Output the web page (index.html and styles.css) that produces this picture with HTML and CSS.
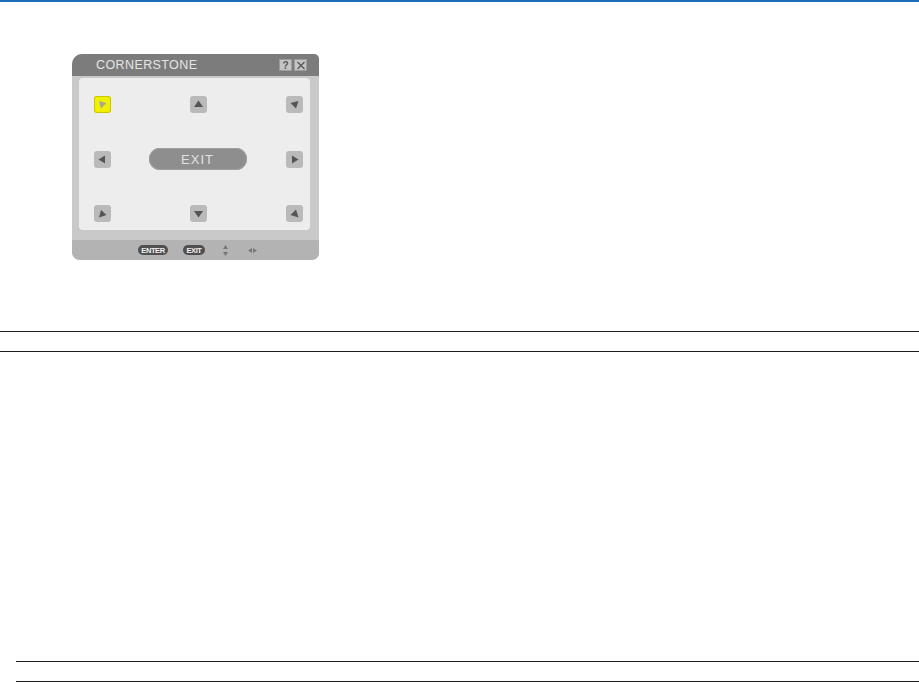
FILE: index.html
```html
<!DOCTYPE html>
<html lang="en">
  <head>
    <meta charset="UTF-8" />
    <title>Cornerstone</title>
    <link rel="stylesheet" href="styles.css">
  </head>
  <body>
    <div class="top-rule"></div>

    <!-- on-screen menu -->
    <div class="osd">
      <div class="osd-title">
        <span class="osd-name">CORNERSTONE</span>
        <span class="osd-icons">
          <span class="osd-icon">?</span>
          <span class="osd-icon">
            <svg width="10" height="9" viewBox="0 0 10 9"><path d="M1.5 1 L8.5 8 M8.5 1 L1.5 8" stroke="#555" stroke-width="1.3" fill="none"/></svg>
          </span>
        </span>
      </div>

      <div class="osd-body">
        <div class="osd-panel">
          <div class="key active">
            <svg viewBox="0 0 17 17"><polygon points="5,5 12.5,7 7,12.5" fill="#a8a890"/></svg>
          </div>
          <div class="key mid">
            <svg viewBox="0 0 17 17"><polygon points="8.5,4.5 13,11 4,11" fill="#555"/></svg>
          </div>
          <div class="key">
            <svg viewBox="0 0 17 17"><polygon points="12.5,5 10,12.5 4.5,7" fill="#555"/></svg>
          </div>

          <div class="key">
            <svg viewBox="0 0 17 17"><polygon points="4.5,8.5 11,4.5 11,12.5" fill="#555"/></svg>
          </div>
          <div class="exit-pill">EXIT</div>
          <div class="key">
            <svg viewBox="0 0 17 17"><polygon points="12.5,8.5 6,4.5 6,12.5" fill="#555"/></svg>
          </div>

          <div class="key">
            <svg viewBox="0 0 17 17"><polygon points="5,12.5 7,5 12.5,10" fill="#555"/></svg>
          </div>
          <div class="key mid">
            <svg viewBox="0 0 17 17"><polygon points="8.5,12.5 13,6 4,6" fill="#555"/></svg>
          </div>
          <div class="key">
            <svg viewBox="0 0 17 17"><polygon points="12.5,12.5 4.5,10 10,4.5" fill="#555"/></svg>
          </div>
        </div>
      </div>

      <div class="osd-foot">
        <span class="btn-tag enter">ENTER</span>
        <span class="btn-tag exit">EXIT</span>
        <svg class="updown" width="5" height="11" viewBox="0 0 5 11"><polygon points="2.5,0 5,4 0,4" fill="#777"/><polygon points="2.5,11 5,7 0,7" fill="#777"/></svg>
        <svg class="leftright" width="9" height="5" viewBox="0 0 9 5"><polygon points="0,2.5 4,0 4,5" fill="#777"/><polygon points="9,2.5 5,0 5,5" fill="#777"/></svg>
      </div>
    </div>

    <div class="rule-row full"></div>
    <div class="rule-row inset"></div>
  </body>
</html>
```

FILE: styles.css
```css
body {
  margin: 0;
  background: white;
  font-family: "Liberation Sans", Arial, sans-serif;
}

.top-rule {
  height: 2px;
  background: #1f6db5;
}

.osd {
  width: 247px;
  margin: 52px 0 0 72px;
  background: #c9c9c9;
  border-radius: 10px 5px 7px 8px;
  overflow: hidden;
}

.osd-title {
  height: 22px;
  background: #7c7c7c;
  display: flex;
  align-items: center;
  justify-content: space-between;
  padding: 0 12px 0 24px;
}

.osd-name {
  color: #e4e4e4;
  font-size: 12.5px;
  letter-spacing: 0.4px;
}

.osd-icons {
  display: flex;
  gap: 2px;
}

.osd-icon {
  width: 13px;
  height: 12px;
  background: #c4c4c4;
  border: 1px solid #9c9c9c;
  box-sizing: border-box;
  display: flex;
  align-items: center;
  justify-content: center;
  font-size: 10px;
  font-weight: bold;
  color: #555;
}

.osd-body {
  padding: 2px 9px 10px 7px;
}

.osd-panel {
  background: #ededed;
  border-radius: 4px;
  height: 152px;
  box-sizing: border-box;
  padding: 18px 7px 8px 15px;
  display: grid;
  grid-template-columns: 17px 1fr 17px;
  grid-template-rows: 17px 22px 17px;
  row-gap: 35px;
  align-items: center;
}

.key {
  width: 17px;
  height: 17px;
  background: #bababa;
  border-radius: 3px;
}

.key svg {
  display: block;
  width: 17px;
  height: 17px;
}

.key.mid {
  justify-self: center;
}

.key.active {
  background: #f0f000;
  box-shadow: inset 0 0 0 1px #c8c800;
}

.exit-pill {
  justify-self: center;
  width: 98px;
  height: 22px;
  margin-left: -2px;
  border-radius: 11px;
  background: #8e8e8e;
  box-shadow: inset 0 0 0 1px #9e9e9e;
  color: #e2e2e2;
  font-size: 13px;
  letter-spacing: 1px;
  display: flex;
  align-items: center;
  justify-content: center;
}

.osd-foot {
  height: 20px;
  background: #b3b3b3;
  display: flex;
  align-items: center;
  padding-left: 66px;
}

.btn-tag {
  height: 10px;
  border-radius: 5px;
  background: #505050;
  color: #f2f2f2;
  font-size: 7.5px;
  font-weight: bold;
  letter-spacing: -0.4px;
  display: flex;
  align-items: center;
  justify-content: center;
}

.btn-tag.enter {
  width: 30px;
}

.btn-tag.exit {
  width: 22px;
  margin-left: 15px;
}

.updown {
  margin-left: 18px;
}

.leftright {
  margin-left: 20px;
}

.rule-row {
  height: 19px;
  border-top: 1px solid #1e1e1e;
  border-bottom: 1px solid #1e1e1e;
}

.rule-row.full {
  margin-top: 71px;
}

.rule-row.inset {
  margin: 309px 0 0 16px;
}
```
